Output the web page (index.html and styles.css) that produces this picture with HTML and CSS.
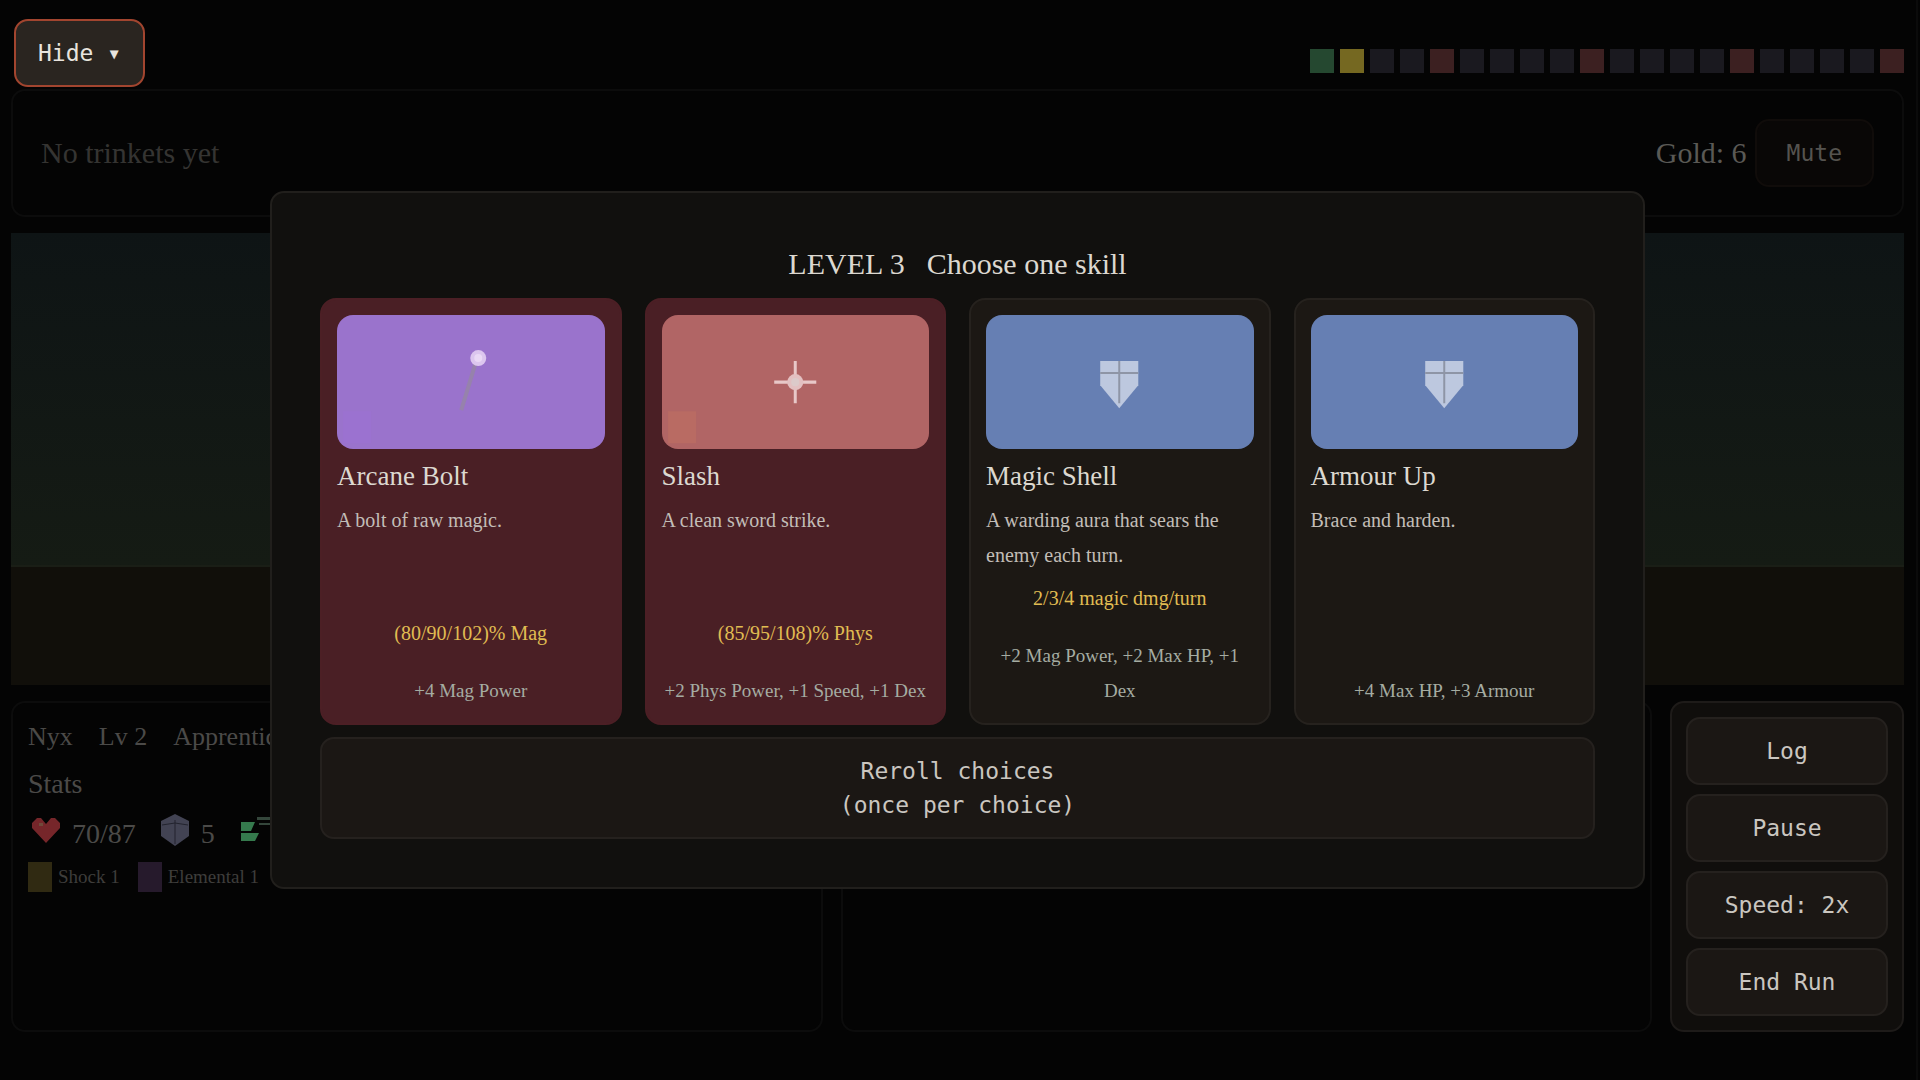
FILE: index.html
```html
<!DOCTYPE html>

<html lang="en">

<head>
	<meta charset="UTF-8" />
	<title>Level 3 - Choose one skill</title>
	<link rel="stylesheet" href="styles.css">
</head>

<body>
	<header class="topbar">
		<button type="button" class="btn hide">Hide ▾</button>
		<div class="progress">
			<i class="done"></i><i class="current"></i><i></i><i></i><i class="boss"></i>
			<i></i><i></i><i></i><i></i><i class="boss"></i>
			<i></i><i></i><i></i><i></i><i class="boss"></i>
			<i></i><i></i><i></i><i></i><i class="boss"></i>
		</div>
	</header>

	<main class="game">
		<section class="panel trinkets">
			<span class="empty">No trinkets yet</span>
			<span class="gold">Gold: 6</span>
			<button type="button" class="btn mute">Mute</button>
		</section>

		<section class="stage">
			<div class="sky"></div>
			<div class="ground"></div>
		</section>

		<div class="bottom">
			<section class="panel hero">
				<div class="name">
					<span>Nyx</span>
					<span>Lv 2</span>
					<span>Apprentice</span>
				</div>
				<div class="label">Stats</div>
				<div class="stats">
					<div class="stat">
						<svg width="36" height="40" viewBox="0 0 36 40">
							<path fill="#76262a" d="M4 9 9 4h4l5 6 5-6h4l5 5v5L18 29 4 14z" />
							<path fill="#704a3a" d="M11 9h4v3h-4z" />
						</svg>
						<span>70/87</span>
					</div>
					<div class="stat">
						<svg width="36" height="40" viewBox="0 0 36 40">
							<path fill="#424353" d="M18 0 32 7v15L18 32 4 22V7z" />
							<path fill="none" stroke="#22232e" d="M18 6v24M5 11l13-2 13 2" />
						</svg>
						<span>5</span>
					</div>
					<div class="stat">
						<svg width="36" height="40" viewBox="0 0 36 40">
							<path fill="#357a4d" d="M5 8h14l-4 9H5zM5 19h18l-4 8H5z" />
							<path fill="#34463b" d="M21 3h15v3H21zM23 9h13v2H23z" />
						</svg>
						<span>7</span>
					</div>
				</div>
				<div class="effects">
					<span class="effect shock">Shock 1</span>
					<span class="effect elemental">Elemental 1</span>
				</div>
			</section>

			<section class="panel"></section>

			<nav class="panel controls">
				<button type="button" class="btn">Log</button>
				<button type="button" class="btn">Pause</button>
				<button type="button" class="btn">Speed: 2x</button>
				<button type="button" class="btn">End Run</button>
			</nav>
		</div>
	</main>

	<div class="overlay">
		<div class="modal" role="dialog" aria-labelledby="modal-title">
			<h2 id="modal-title"><span>LEVEL 3</span> <span>Choose one skill</span></h2>

			<div class="cards">
				<button type="button" class="card attack">
					<svg class="art arcane" viewBox="0 0 267 134">
						<path fill="#9b72d0" d="M6 96h28v32H6z" />
						<path stroke="#9682ac" stroke-width="4" d="M138 49 124 95" />
						<circle fill="#dcc6ee" cx="141" cy="43" r="8" />
						<circle fill="#ead9f5" cx="141" cy="43" r="4" />
					</svg>
					<span class="title">Arcane Bolt</span>
					<span class="desc">A bolt of raw magic.</span>
					<span class="effect-text">(80/90/102)% Mag</span>
					<span class="bonus">+4 Mag Power</span>
				</button>

				<button type="button" class="card attack">
					<svg class="art slash" viewBox="0 0 267 134">
						<path fill="#b96b63" d="M6 96h28v32H6z" />
						<path stroke="#e8c8c8" stroke-width="3" d="M112 67h42M133 46v42" />
						<circle fill="#e3c0c1" cx="133" cy="67" r="8" />
						<circle fill="#dccaca" cx="133" cy="67" r="4" />
					</svg>
					<span class="title">Slash</span>
					<span class="desc">A clean sword strike.</span>
					<span class="effect-text">(85/95/108)% Phys</span>
					<span class="bonus">+2 Phys Power, +1 Speed, +1 Dex</span>
				</button>

				<button type="button" class="card">
					<svg class="art guard" viewBox="0 0 267 134">
						<path fill="#bdc8df" d="M114 46h38v24l-19 23-19-23z" />
						<path fill="none" stroke="#8e95a6" stroke-width="2" d="M133 46v42M114 58h38" />
					</svg>
					<span class="title">Magic Shell</span>
					<span class="desc">A warding aura that sears the enemy each turn.</span>
					<span class="effect-text">2/3/4 magic dmg/turn</span>
					<span class="bonus">+2 Mag Power, +2 Max HP, +1 Dex</span>
				</button>

				<button type="button" class="card">
					<svg class="art guard" viewBox="0 0 267 134">
						<path fill="#bdc8df" d="M114 46h38v24l-19 23-19-23z" />
						<path fill="none" stroke="#8e95a6" stroke-width="2" d="M133 46v42M114 58h38" />
					</svg>
					<span class="title">Armour Up</span>
					<span class="desc">Brace and harden.</span>
					<span class="bonus">+4 Max HP, +3 Armour</span>
				</button>
			</div>

			<button type="button" class="btn reroll">Reroll choices<br />(once per choice)</button>
		</div>
	</div>
</body>

</html>
```
FILE: styles.css
```css
* {
	box-sizing: border-box;
}

html {
	background: #040404;
}

body {
	margin: 0 2px 0 0;
	min-height: 100vh;
	padding: 19px 12px 0 11px;
	border-right: 2px solid #0b0b0b;
	font-family: "Liberation Serif", serif;
	font-size: 30px;
	color: #5a5955;
}

h2 {
	margin: 0;
	font-weight: normal;
}

/* buttons */

.btn {
	padding: 15px;
	border: 2px solid #25211e;
	border-radius: 14px;
	background: #1b1714;
	color: #cac6c0;
	font-family: "DejaVu Sans Mono", monospace;
	font-size: 23px;
	line-height: 34px;
}

.hide {
	padding: 15px 22px;
	border-color: #a2452f;
	background: #2a2520;
	color: #e8e4de;
}

.mute {
	padding: 15px 30px;
	border-color: #100c0a;
	background: #090706;
	color: #55534f;
}

/* top bar */

.topbar {
	display: flex;
	justify-content: space-between;
	align-items: flex-end;
	padding: 0 0 2px 3px;
}

.progress {
	display: flex;
	gap: 6px;
	margin-bottom: 14px;
}

.progress i {
	width: 24px;
	height: 24px;
	background: #1a191f;
}

.progress .done {
	background: #254830;
}

.progress .current {
	background: #756821;
}

.progress .boss {
	background: #3c2021;
}

/* game area */

.game {
	display: flex;
	flex-direction: column;
	gap: 16px;
}

.panel {
	border: 2px solid #0c0c0c;
	border-radius: 14px;
}

.trinkets {
	display: flex;
	align-items: center;
	gap: 8px;
	padding: 28px;
}

.empty {
	flex: 1;
	color: #353432;
}

.sky {
	height: 334px;
	background: linear-gradient(#0e1415, #151b14);
	border-bottom: 2px solid #1a1e16;
}

.ground {
	height: 118px;
	background: #110f0a;
}

.bottom {
	display: grid;
	grid-template-columns: 1fr 1fr 234px;
	gap: 18px;
}

.hero {
	display: flex;
	flex-direction: column;
	gap: 6px;
	padding: 15px;
	color: #4b4a48;
	font-size: 28px;
	line-height: 44px;
}

.name {
	display: flex;
	gap: 26px;
	font-size: 26px;
	line-height: 38px;
}

.stats {
	display: flex;
	gap: 21px;
}

.stat {
	display: flex;
	align-items: center;
	gap: 8px;
}

.effects {
	display: flex;
	gap: 18px;
}

.effect {
	display: flex;
	gap: 6px;
	font-size: 19px;
	line-height: 30px;
	color: #3e3d3b;
}

.effect::before {
	content: "";
	width: 24px;
	height: 30px;
}

.shock::before {
	background: #302a12;
}

.elemental::before {
	background: #261a2c;
}

.controls {
	display: flex;
	flex-direction: column;
	gap: 9px;
	padding: 14px;
	border-color: #1e1b19;
	background: #100e0c;
}

/* skill picker */

.overlay {
	position: fixed;
	inset: 0 5px 0 0;
	display: flex;
	align-items: center;
	justify-content: center;
	pointer-events: none;
}

.modal {
	display: flex;
	flex-direction: column;
	gap: 12px;
	width: 90%;
	max-width: 1375px;
	padding: 48px;
	border: 2px solid #211f1c;
	border-radius: 14px;
	background: #11100e;
	color: #dcd8d0;
	pointer-events: auto;
}

.modal h2 {
	display: flex;
	justify-content: center;
	gap: 22px;
	font-size: 30px;
	line-height: 45px;
}

.cards {
	display: grid;
	grid-template-columns: repeat(4, 1fr);
	gap: 23px;
}

.card {
	display: flex;
	flex-direction: column;
	gap: 8px;
	padding: 15px;
	border: 2px solid #26221e;
	border-radius: 16px;
	background: #1c1814;
	color: #dcd8d0;
	font-family: inherit;
	font-size: 20px;
	line-height: 35px;
}

.attack {
	border-color: #4c1f25;
	background: #4a1f25;
}

.art {
	width: 100%;
	border-radius: 16px;
}

.arcane {
	background: #9a73cc;
}

.slash {
	background: #b16565;
}

.guard {
	background: #667fb3;
}

.title {
	text-align: left;
	font-size: 27px;
	line-height: 38px;
}

.desc {
	flex: 1;
	text-align: left;
	color: #c2bdb7;
}

.effect-text {
	color: #e0bc52;
}

.bonus {
	margin-top: 14px;
	font-size: 19px;
	color: #a5aca2;
}
```
